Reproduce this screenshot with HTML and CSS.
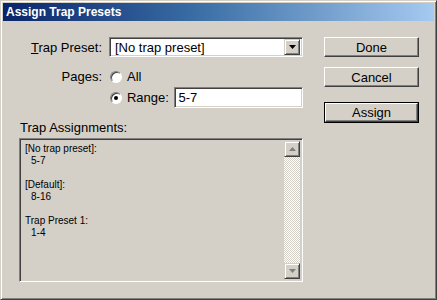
FILE: index.html
```html
<!DOCTYPE html>
<html>
<head>
<meta charset="utf-8">
<link rel="stylesheet" href="styles.css">
</head>
<body>
<div class="window">
  <div class="titlebar">Assign Trap Presets</div>
  <div class="content">
    <div class="form">
      <div class="grid">
        <label class="lbl"><u>T</u>rap Preset:</label>
        <div class="select">
          <span class="select-text">[No trap preset]</span>
          <span class="select-btn"><svg width="7" height="4" viewBox="0 0 7 4"><path d="M0 0H7L3.5 4Z" fill="#000"/></svg></span>
        </div>
        <label class="lbl pages">Pages:</label>
        <div class="radio-row all"><span class="radio"></span><span>All</span></div>
        <span></span>
        <div class="radio-row range"><span class="radio checked"></span><span class="range-lbl">Range:</span><div class="input">5-7</div></div>
      </div>
      <div class="assign-lbl">Trap Assignments:</div>
      <div class="listbox">
        <div class="list">
          <div>[No trap preset]:</div>
          <div class="ind">5-7</div>
          <div>&nbsp;</div>
          <div>[Default]:</div>
          <div class="ind">8-16</div>
          <div>&nbsp;</div>
          <div>Trap Preset 1:</div>
          <div class="ind">1-4</div>
        </div>
        <div class="scrollbar">
          <div class="sbtn"><svg width="7" height="4" viewBox="0 0 7 4"><path d="M0 4H7L3.5 0Z" fill="#808080"/></svg></div>
          <div class="track"></div>
          <div class="sbtn"><svg width="7" height="4" viewBox="0 0 7 4"><path d="M0 0H7L3.5 4Z" fill="#808080"/></svg></div>
        </div>
      </div>
    </div>
    <div class="buttons">
      <div class="btn">Done</div>
      <div class="btn">Cancel</div>
      <div class="btn default"><div class="btn-inner">Assign</div></div>
    </div>
  </div>
</div>
</body>
</html>
```
FILE: styles.css
```css
html, body {
  margin: 0;
  padding: 0;
  background: #d4d0c8;
}
.window {
  width: 437px;
  height: 300px;
  box-sizing: border-box;
  background: #d4d0c8;
  border-top: 1px solid #d4d0c8;
  border-left: 1px solid #d4d0c8;
  border-right: 1px solid #404040;
  border-bottom: 1px solid #404040;
  box-shadow: inset 1px 1px #fff, inset -1px -1px #808080;
  padding: 2px;
  font-family: "Liberation Sans", Arial, sans-serif;
  font-size: 13px;
  color: #000;
}
.titlebar {
  height: 18px;
  line-height: 18px;
  background: linear-gradient(to right, #0a246a 0%, #3a6ea5 45%, #a6caf0 100%);
  color: #fff;
  font-weight: bold;
  font-size: 12px;
  padding-left: 3px;
}
.content {
  display: flex;
  padding-top: 16px;
  padding-left: 16px;
}
.form {
  width: 284px;
}
.grid {
  display: grid;
  grid-template-columns: 83px 194px;
  column-gap: 7px;
  grid-template-rows: 20px 30px 21px;
}
.grid > .lbl {
  text-align: right;
  align-self: center;
}
.grid > .pages,
.grid > .all {
  align-self: end;
  height: 20px;
  line-height: 20px;
}
.select {
  height: 20px;
  box-sizing: border-box;
  background: #fff;
  border-top: 1px solid #808080;
  border-left: 1px solid #808080;
  border-right: 1px solid #fff;
  border-bottom: 1px solid #fff;
  box-shadow: inset 1px 1px #404040, inset -1px -1px #d4d0c8;
  display: flex;
  align-items: center;
  padding: 2px;
}
.select-text {
  flex: 1;
  padding-left: 3px;
  font-size: 13px;
}
.select-btn {
  width: 16px;
  height: 16px;
  box-sizing: border-box;
  background: #d4d0c8;
  border-top: 1px solid #d4d0c8;
  border-left: 1px solid #d4d0c8;
  border-right: 1px solid #404040;
  border-bottom: 1px solid #404040;
  box-shadow: inset 1px 1px #fff, inset -1px -1px #808080;
  display: flex;
  align-items: center;
  justify-content: center;
}
.radio-row {
  display: flex;
  align-items: center;
  gap: 5px;
  padding-left: 1px;
}
.radio {
  width: 12px;
  height: 12px;
  box-sizing: border-box;
  border-radius: 50%;
  background: #fff;
  border: 1px solid;
  border-color: #808080 #fff #fff #808080;
  box-shadow: inset 1px 1px #404040;
  position: relative;
}
.radio.checked::after {
  content: "";
  position: absolute;
  left: 3px;
  top: 3px;
  width: 4px;
  height: 4px;
  border-radius: 50%;
  background: #000;
}
.range-lbl {
  width: 43px;
}
.input {
  width: 130px;
  height: 21px;
  box-sizing: border-box;
  background: #fff;
  border-top: 1px solid #808080;
  border-left: 1px solid #808080;
  border-right: 1px solid #fff;
  border-bottom: 1px solid #fff;
  box-shadow: inset 1px 1px #404040, inset -1px -1px #d4d0c8;
  padding: 2px 3px;
  line-height: 15px;
}
.assign-lbl {
  margin-top: 12px;
  margin-left: 1px;
  height: 16px;
  line-height: 16px;
}
.listbox {
  margin-top: 2px;
  height: 144px;
  box-sizing: border-box;
  border-top: 1px solid #808080;
  border-left: 1px solid #808080;
  border-right: 1px solid #fff;
  border-bottom: 1px solid #fff;
  box-shadow: inset 1px 1px #404040, inset -1px -1px #d4d0c8;
  padding: 2px;
  display: flex;
}
.list {
  flex: 1;
  font-size: 10px;
  line-height: 12px;
  padding-left: 3px;
  padding-top: 2px;
}
.list .ind {
  padding-left: 6px;
}
.scrollbar {
  width: 16px;
  display: flex;
  flex-direction: column;
}
.sbtn {
  width: 16px;
  height: 16px;
  box-sizing: border-box;
  background: #d4d0c8;
  border-top: 1px solid #d4d0c8;
  border-left: 1px solid #d4d0c8;
  border-right: 1px solid #404040;
  border-bottom: 1px solid #404040;
  box-shadow: inset 1px 1px #fff, inset -1px -1px #808080;
  display: flex;
  align-items: center;
  justify-content: center;
}
.track {
  flex: 1;
  background: repeating-conic-gradient(#d4d0c8 0 25%, #fff 0 50%) 0 0 / 2px 2px;
}
.buttons {
  margin-left: 21px;
  width: 95px;
  display: flex;
  flex-direction: column;
}
.btn {
  height: 20px;
  box-sizing: border-box;
  border-top: 1px solid #fff;
  border-left: 1px solid #fff;
  border-right: 1px solid #404040;
  border-bottom: 1px solid #404040;
  box-shadow: inset -1px -1px #808080;
  display: flex;
  align-items: center;
  justify-content: center;
  margin-bottom: 10px;
}
.btn.default {
  margin-top: 5px;
  height: 21px;
  border: 1px solid #000;
  box-shadow: none;
  padding: 0;
}
.btn-inner {
  width: 100%;
  height: 100%;
  box-sizing: border-box;
  border-top: 1px solid #fff;
  border-left: 1px solid #fff;
  border-right: 1px solid #404040;
  border-bottom: 1px solid #404040;
  box-shadow: inset -1px -1px #808080;
  display: flex;
  align-items: center;
  justify-content: center;
}
```
